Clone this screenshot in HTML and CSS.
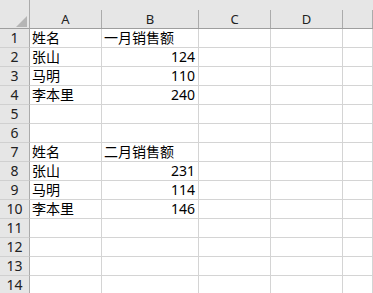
FILE: index.html
```html
<!DOCTYPE html>
<html lang="zh">
<head>
<meta charset="utf-8">
<title>Sheet</title>
<link rel="stylesheet" href="styles.css">
</head>
<body>
<div class="sheet">
  <div class="ch corner"><span class="tri"></span></div>
  <div class="ch"><span>A</span></div>
  <div class="ch"><span>B</span></div>
  <div class="ch"><span>C</span></div>
  <div class="ch"><span>D</span></div>
  <div class="ch"><span></span></div>

  <div class="rh">1</div><div class="c">姓名</div><div class="c">一月销售额</div><div class="c"></div><div class="c"></div><div class="c"></div>
  <div class="rh">2</div><div class="c">张山</div><div class="c num">124</div><div class="c"></div><div class="c"></div><div class="c"></div>
  <div class="rh">3</div><div class="c">马明</div><div class="c num">110</div><div class="c"></div><div class="c"></div><div class="c"></div>
  <div class="rh">4</div><div class="c">李本里</div><div class="c num">240</div><div class="c"></div><div class="c"></div><div class="c"></div>
  <div class="rh">5</div><div class="c"></div><div class="c"></div><div class="c"></div><div class="c"></div><div class="c"></div>
  <div class="rh">6</div><div class="c"></div><div class="c"></div><div class="c"></div><div class="c"></div><div class="c"></div>
  <div class="rh">7</div><div class="c">姓名</div><div class="c">二月销售额</div><div class="c"></div><div class="c"></div><div class="c"></div>
  <div class="rh">8</div><div class="c">张山</div><div class="c num">231</div><div class="c"></div><div class="c"></div><div class="c"></div>
  <div class="rh">9</div><div class="c">马明</div><div class="c num">114</div><div class="c"></div><div class="c"></div><div class="c"></div>
  <div class="rh">10</div><div class="c">李本里</div><div class="c num">146</div><div class="c"></div><div class="c"></div><div class="c"></div>
  <div class="rh">11</div><div class="c"></div><div class="c"></div><div class="c"></div><div class="c"></div><div class="c"></div>
  <div class="rh">12</div><div class="c"></div><div class="c"></div><div class="c"></div><div class="c"></div><div class="c"></div>
  <div class="rh">13</div><div class="c"></div><div class="c"></div><div class="c"></div><div class="c"></div><div class="c"></div>
  <div class="rh">14</div><div class="c"></div><div class="c"></div><div class="c"></div><div class="c"></div><div class="c"></div>
</div>
</body>
</html>
```

FILE: styles.css
```css
html, body {
  margin: 0;
  padding: 0;
  background: #ffffff;
  overflow: hidden;
}

.sheet {
  display: grid;
  grid-template-columns: 30px 72px 97px 72px 72px 1fr;
  grid-template-rows: 29px;
  grid-auto-rows: 19px;
  width: 373px;
  font-family: "Noto Sans", "Noto Sans CJK SC", sans-serif;
  color: #111111;
}

.ch {
  box-sizing: border-box;
  background: #e6e6e6;
  border-bottom: 1px solid #9e9e9e;
  padding-top: 10px;
}

.ch span {
  display: block;
  height: 18px;
  box-sizing: border-box;
  border-right: 1px solid #ababab;
  text-align: center;
  font-size: 13px;
  line-height: 18px;
  color: #222222;
}

.corner {
  display: flex;
  justify-content: flex-end;
  align-items: flex-end;
  padding: 0 2px 1px 0;
  border-right: 1px solid #ababab;
}

.corner .tri {
  display: block;
  width: 11px;
  height: 11px;
  border: 0;
  background: #b5b5b5;
  clip-path: polygon(100% 0, 100% 100%, 0 100%);
}

.rh {
  box-sizing: border-box;
  background: #e6e6e6;
  border-right: 1px solid #ababab;
  border-bottom: 1px solid #d0d0d0;
  text-align: center;
  font-size: 14px;
  line-height: 18px;
  color: #222222;
}

.c {
  box-sizing: border-box;
  border-right: 1px solid #d4d4d4;
  border-bottom: 1px solid #d4d4d4;
  padding: 0 3px 0 2px;
  font-size: 14px;
  line-height: 18px;
  white-space: nowrap;
  overflow: hidden;
  color: #000000;
}

.num {
  text-align: right;
}
```
